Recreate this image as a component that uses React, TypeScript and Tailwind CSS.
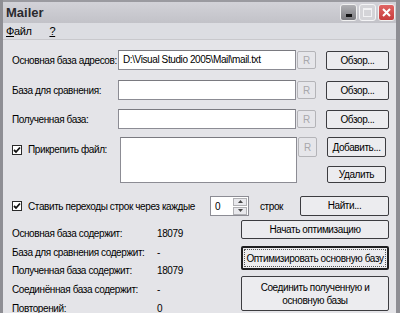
import React from 'react'

function Btn({ children, className = '' }: { children: React.ReactNode; className?: string }) {
  return (
    <div
      className={`flex items-center justify-center rounded-[2px] border border-[#3c3c40] bg-[#ececef] text-center leading-[13px] ${className}`}
    >
      {children}
    </div>
  )
}

function RBtn({ className = '' }: { className?: string }) {
  return (
    <div
      className={`flex h-[18px] w-[19px] items-center justify-center rounded-[2px] border border-[#b4b4b8] bg-[#e6e6ea] text-[10px] text-[#a8a8ac] ${className}`}
    >
      R
    </div>
  )
}

function Check() {
  return (
    <div className="flex h-[10px] w-[10px] shrink-0 items-center justify-center border border-[#2a2a2a] bg-white">
      <svg width="8" height="8" viewBox="0 0 8 8">
        <path d="M1 4 L3 6 L7 1.5" fill="none" stroke="#111" strokeWidth="1.8" />
      </svg>
    </div>
  )
}

function Field({ className = '', children }: { className?: string; children?: React.ReactNode }) {
  return (
    <div
      className={`overflow-hidden border border-[#8c8c94] border-t-[#7a7a80] bg-white px-[4px] leading-[18px] ${className}`}
    >
      {children}
    </div>
  )
}

export default function App() {
  const stats: [string, string][] = [
    ['Основная база содержит:', '18079'],
    ['База для сравнения содержит:', '-'],
    ['Полученная база содержит:', '18079'],
    ['Соединённая база содержит:', '-'],
    ['Повторений:', '0'],
  ]

  return (
    <div className="relative h-[313px] w-[400px] overflow-hidden whitespace-nowrap border-l-[3px] border-r-[4px] border-[#8e8e94] bg-[#e4e4e8] font-['Liberation_Sans',sans-serif] text-[10px] tracking-[-0.4px] text-black">
      {/* title bar */}
      <div className="flex h-[23px] items-center justify-between border-t-2 border-[#9a9aa0] bg-gradient-to-b from-[#d2d2d8] to-[#c2c2c8] pl-[3px] pr-[1px]">
        <span className="text-[13px] font-bold tracking-normal text-[#2a2a2e]">Mailer</span>
        <div className="flex items-center gap-[2px]">
          <div className="flex h-[17px] w-[17px] items-end justify-center rounded-[3px] border border-[#f0f0f0] bg-gradient-to-b from-[#b0b0b4] to-[#7c7c80] pb-[3px]">
            <div className="h-[3px] w-[6px] bg-[#111]" />
          </div>
          <div className="flex h-[17px] w-[17px] items-center justify-center rounded-[3px] border border-[#f4f4f6] bg-[#d4d4d8]">
            <div className="h-[9px] w-[9px] border border-t-2 border-[#f2f2f4]" />
          </div>
          <div className="flex h-[17px] w-[17px] items-center justify-center rounded-[3px] border border-[#f0f0f0] bg-gradient-to-b from-[#e06464] to-[#c83c3c]">
            <svg width="11" height="11" viewBox="0 0 11 11">
              <path d="M2 2 L9 9 M9 2 L2 9" stroke="#fff" strokeWidth="2" />
            </svg>
          </div>
        </div>
      </div>

      {/* menu */}
      <div className="flex h-[17px] items-center gap-[18px] border-b border-[#c8c8cc] bg-[#dcdde2] pl-[3px] text-[11px]">
        <span>
          <span className="underline">Ф</span>айл
        </span>
        <span className="underline">?</span>
      </div>

      {/* body */}
      <div className="flex flex-col pl-[9px] pt-[10px]">
        {[
          ['Основная база адресов:', 'D:\\Visual Studio 2005\\Mail\\mail.txt'],
          ['База для сравнения:', ''],
          ['Полученная база:', ''],
        ].map(([label, value], i) => (
          <div key={label} className={`flex h-[20px] items-center ${i === 0 ? '' : i === 1 ? 'mt-[10px]' : 'mt-[9px]'}`}>
            <span className="w-[106px]">{label}</span>
            <Field className="h-[20px] w-[178px]">{value}</Field>
            <RBtn className="ml-[1px]" />
            <Btn className="ml-[10px] h-[19px] w-[63px]">Обзор...</Btn>
          </div>
        ))}

        <div className="mt-[8px] flex h-[46px] items-start">
          <div className="flex w-[108px] items-center gap-[6px] pt-[5px]">
            <Check />
            <span>Прикрепить файл:</span>
          </div>
          <Field className="h-[46px] w-[177px]" />
          <RBtn className="ml-[1px] h-[20px]" />
          <div className="ml-[10px] flex flex-col gap-[9px]">
            <Btn className="h-[20px] w-[59px]">Добавить...</Btn>
            <Btn className="h-[17px] w-[59px]">Удалить</Btn>
          </div>
        </div>

        <div className="mt-[12px] flex h-[22px] items-center">
          <Check />
          <span className="ml-[6px] w-[182px]">Ставить переходы строк через каждые</span>
          <div className="flex h-[20px] w-[39px] items-center justify-between border border-[#8c8c94] bg-white pl-[4px] pr-[1px]">
            <span>0</span>
            <div className="flex flex-col gap-[1px]">
              <div className="flex h-[8px] w-[14px] items-center justify-center border border-[#b0b0b4] bg-[#e8e8ec]">
                <svg width="5" height="3" viewBox="0 0 5 3">
                  <path d="M0 3 L2.5 0 L5 3 Z" fill="#444" />
                </svg>
              </div>
              <div className="flex h-[8px] w-[14px] items-center justify-center border border-[#b0b0b4] bg-[#e8e8ec]">
                <svg width="5" height="3" viewBox="0 0 5 3">
                  <path d="M0 0 L2.5 3 L5 0 Z" fill="#444" />
                </svg>
              </div>
            </div>
          </div>
          <span className="ml-[11px] w-[40px]">строк</span>
          <Btn className="mb-[1px] h-[20px] w-[89px]">Найти...</Btn>
        </div>

        <div className="mt-[3px] flex">
          <div className="flex w-[229px] flex-col pt-[4px]">
            {stats.map(([l, v]) => (
              <div key={l} className="flex h-[18.7px] items-center">
                <span className="w-[145px]">{l}</span>
                <span>{v}</span>
              </div>
            ))}
          </div>
          <div className="flex w-[148px] flex-col">
            <Btn className="h-[19px]">Начать оптимизацию</Btn>
            <div className="mt-[7px] h-[24px] rounded-[2px] border-2 border-[#1e1e20] bg-[#ececef] p-[1px]">
              <div className="flex h-full items-center justify-center border border-dotted border-[#555]">
                Оптимизировать основную базу
              </div>
            </div>
            <Btn className="mt-[6px] h-[35px]">
              Соединить полученную и
              <br />
              основную базы
            </Btn>
          </div>
        </div>
      </div>
    </div>
  )
}
